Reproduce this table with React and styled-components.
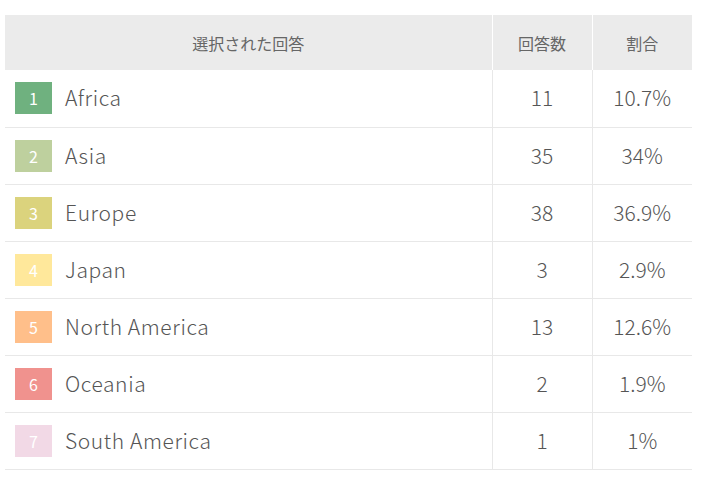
import React from "react";
import styled, { createGlobalStyle } from "styled-components";

const GlobalStyle = createGlobalStyle`
  body {
    margin: 0;
    background: #ffffff;
    font-family: "Noto Sans CJK JP", "Noto Sans", sans-serif;
  }
`;

const Wrapper = styled.div`
  padding: 15px 15px 0 5px;
`;

const Table = styled.table`
  width: 687px;
  border-collapse: collapse;
  table-layout: fixed;
`;

const HeadCell = styled.th`
  height: 55px;
  padding: 0;
  background-color: #ebebeb;
  color: #666666;
  font-size: 16px;
  font-weight: 400;
  text-align: center;
  border-left: 1px solid #ffffff;
  &:first-child {
    border-left: none;
  }
`;

const Row = styled.tr`
  height: 57px;
  border-bottom: 1px solid #e8e8e8;
`;

const Cell = styled.td`
  padding: 0 0 2px;
  color: #555555;
  font-size: 21px;
  font-weight: 300;
  text-align: center;
  border-left: 1px solid #e8e8e8;
`;

const AnswerCell = styled.td`
  padding: 0 0 0 10px;
`;

const Answer = styled.div`
  display: flex;
  align-items: center;
  gap: 13px;
  color: #555555;
  font-size: 21px;
  font-weight: 300;
  letter-spacing: 0.6px;
`;

const Label = styled.span`
  padding-bottom: 2px;
`;

const Badge = styled.span`
  width: 37px;
  height: 32px;
  display: flex;
  align-items: center;
  justify-content: center;
  background-color: ${(props) => props.color};
  color: #ffffff;
  font-size: 16px;
  font-weight: 400;
  letter-spacing: 0;
`;

const rows = [
  { name: "Africa", count: 11, rate: "10.7%", color: "#6fb17f" },
  { name: "Asia", count: 35, rate: "34%", color: "#bed09e" },
  { name: "Europe", count: 38, rate: "36.9%", color: "#dbd37d" },
  { name: "Japan", count: 3, rate: "2.9%", color: "#ffe89b" },
  { name: "North America", count: 13, rate: "12.6%", color: "#ffbf8a" },
  { name: "Oceania", count: 2, rate: "1.9%", color: "#f0928e" },
  { name: "South America", count: 1, rate: "1%", color: "#f2d9e6" },
];

function App() {
  return (
    <Wrapper>
      <GlobalStyle />
      <Table>
        <colgroup>
          <col style={{ width: 487 }} />
          <col style={{ width: 100 }} />
          <col style={{ width: 100 }} />
        </colgroup>
        <thead>
          <tr>
            <HeadCell>選択された回答</HeadCell>
            <HeadCell>回答数</HeadCell>
            <HeadCell>割合</HeadCell>
          </tr>
        </thead>
        <tbody>
          {rows.map((r, i) => (
            <Row key={r.name}>
              <AnswerCell>
                <Answer>
                  <Badge color={r.color}>{i + 1}</Badge>
                  <Label>{r.name}</Label>
                </Answer>
              </AnswerCell>
              <Cell>{r.count}</Cell>
              <Cell>{r.rate}</Cell>
            </Row>
          ))}
        </tbody>
      </Table>
    </Wrapper>
  );
}

export default App;
